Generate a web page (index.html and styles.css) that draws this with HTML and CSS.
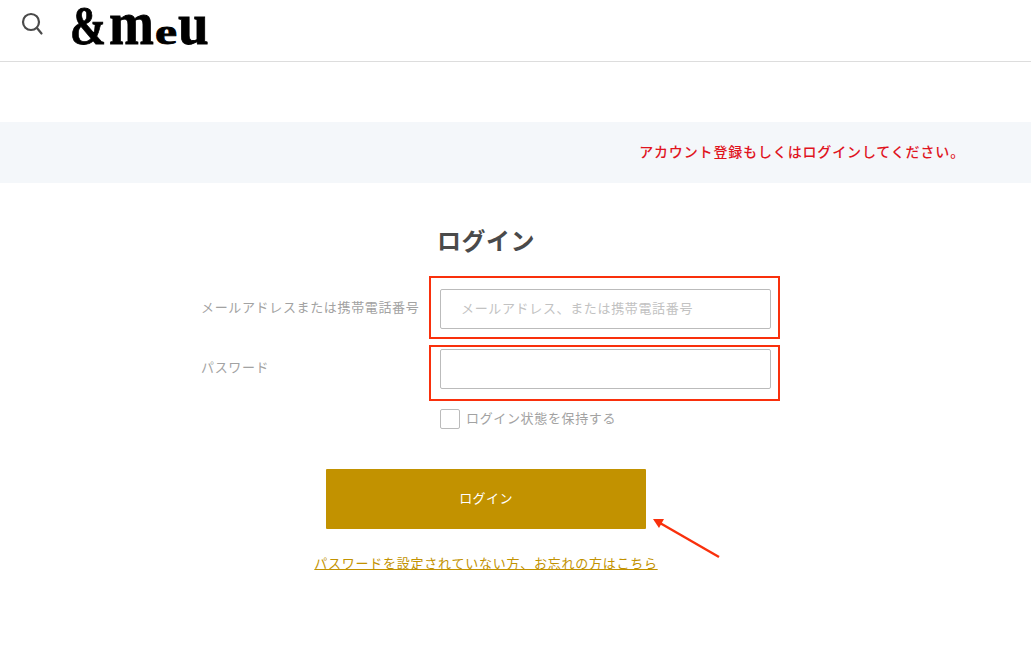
FILE: index.html
```html
<!DOCTYPE html>
<html lang="ja">
<head>
<meta charset="utf-8">
<title>ログイン</title>
<link rel="stylesheet" href="styles.css">
</head>
<body>
<header class="site-header">
  <svg class="search-icon" width="24" height="24" viewBox="0 0 24 24" fill="none" stroke="#4a4a4a" stroke-width="2.2" stroke-linecap="round"><circle cx="10" cy="10" r="8"/><path d="M15.8 15.8 20.5 21.5"/></svg>
  <div class="logo"><span class="logo-amp">&amp;</span><span class="logo-m">m</span><span class="logo-e">e</span><span class="logo-u">u</span></div>
</header>
<div class="notice"><p class="notice-text">アカウント登録もしくはログインしてください。</p></div>
<main class="login">
  <h1 class="login-title">ログイン</h1>
  <form class="login-form">
    <div class="fields">
      <label class="field-label label-email" for="email">メールアドレスまたは携帯電話番号</label>
      <input class="field-input" id="email" type="text" placeholder="メールアドレス、または携帯電話番号">
      <label class="field-label label-password" for="password">パスワード</label>
      <input class="field-input" id="password" type="password">
      <label class="remember">
        <span class="checkbox"></span>
        <span class="remember-text">ログイン状態を保持する</span>
      </label>
    </div>
    <button class="submit" type="button">ログイン</button>
    <a class="forgot" href="#">パスワードを設定されていない方、お忘れの方はこちら</a>
  </form>
</main>
<div class="mark mark-email"></div>
<div class="mark mark-password"></div>
<svg class="mark-arrow" width="72" height="44" viewBox="0 0 72 44"><path d="M67 39 8 5" stroke="#f9300c" stroke-width="2.4" fill="none"/><path d="M1 1 12 1 7 10Z" fill="#f9300c"/></svg>
</body>
</html>
```
FILE: styles.css
```css
* { box-sizing: border-box; }
html, body { margin: 0; padding: 0; }
body {
  position: relative;
  height: 654px;
  overflow: hidden;
  background: #fff;
  color: #a2a2a2;
  font-family: "Noto Sans CJK JP", "Noto Sans", sans-serif;
}
.site-header {
  display: flex;
  align-items: flex-start;
  height: 62px;
  padding: 3px 0 0 21px;
  border-bottom: 1px solid #ddd;
}
.search-icon { margin-top: 9px; }
.logo {
  display: flex;
  align-items: baseline;
  height: 40px;
  margin-left: 25px;
  color: #000;
  font-family: "Liberation Serif", serif;
  font-weight: 700;
  line-height: 40px;
  -webkit-text-stroke: 0.8px #000;
}
.logo-amp, .logo-m, .logo-e, .logo-u {
  display: inline-block;
  transform-origin: left bottom;
}
.logo-amp { font-size: 54px; margin-right: -6px; transform: scaleX(0.8); }
.logo-m { font-size: 62px; margin-right: -5.6px; transform: scaleX(0.87); }
.logo-e { font-size: 36px; margin-right: 7px; transform: scaleX(1.38); }
.logo-u { font-size: 60px; margin-right: -3.4px; transform: scaleX(0.92); }
.notice {
  display: flex;
  justify-content: flex-end;
  align-items: center;
  height: 61px;
  margin-top: 60px;
  padding: 0 66px 3px 0;
  background: #f4f7fa;
}
.notice-text {
  margin: 0;
  color: #e0141e;
  font-size: 14px;
  font-weight: 500;
  letter-spacing: 0.85px;
}
.login { width: 570px; margin: 0 0 0 201px; }
.login-title {
  margin: 39px 0 0;
  color: #4a4a4a;
  font-size: 24px;
  font-weight: 700;
  line-height: 36px;
  letter-spacing: 0.5px;
  text-align: center;
}
.login-form { display: flex; flex-direction: column; align-items: center; }
.fields {
  display: grid;
  grid-template-columns: 239px 331px;
  row-gap: 20px;
  width: 100%;
  margin-top: 31px;
}
.field-label {
  font-size: 13px;
  line-height: 20px;
  letter-spacing: 0.65px;
  white-space: nowrap;
}
.label-email { padding-top: 8px; }
.label-password { padding-top: 8px; }
.field-input {
  width: 331px;
  height: 40px;
  padding: 0 20px 4px;
  border: 1px solid #bbb;
  border-radius: 2px;
  background: #fff;
  font-family: inherit;
  font-size: 13px;
  letter-spacing: 0.65px;
}
.field-input::placeholder { color: #c2c2c2; opacity: 1; }
.remember {
  grid-column: 2;
  display: flex;
  align-items: center;
  gap: 6px;
  height: 20px;
}
.checkbox {
  width: 20px;
  height: 20px;
  border: 1px solid #bbb;
  border-radius: 2px;
}
.remember-text { font-size: 13px; letter-spacing: 0.65px; padding-bottom: 4px; }
.submit {
  width: 320px;
  height: 60px;
  margin-top: 40px;
  padding-bottom: 5px;
  border: 0;
  border-radius: 1px;
  background: #c29200;
  color: #fff;
  font-family: inherit;
  font-size: 13px;
  letter-spacing: 0.4px;
}
.forgot {
  margin-top: 24px;
  color: #c29200;
  font-size: 13px;
  line-height: 20px;
  letter-spacing: 0.75px;
  white-space: nowrap;
}
.mark { position: absolute; left: 429px; width: 351px; border: 2px solid #f9300c; }
.mark-email { top: 276px; height: 63px; }
.mark-password { top: 345px; height: 56px; }
.mark-arrow { position: absolute; left: 652px; top: 518px; }
```
